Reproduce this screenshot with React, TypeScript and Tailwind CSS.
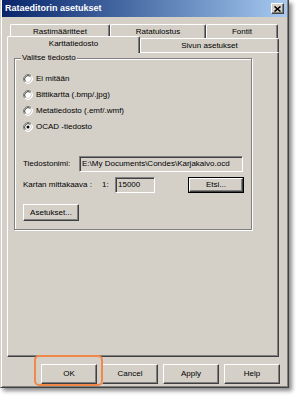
import React from "react";

function Radio({ checked }: { checked?: boolean }) {
  return (
    <svg width="10" height="10" viewBox="0 0 10 10" className="shrink-0">
      <circle cx="5" cy="5" r="4" fill="#fff" />
      <path d="M8.18 1.82 A4.5 4.5 0 0 0 1.82 8.18" stroke="#808080" fill="none" strokeWidth="1" />
      <path d="M1.82 8.18 A4.5 4.5 0 0 0 8.18 1.82" stroke="#ffffff" fill="none" strokeWidth="1" />
      <path d="M7.47 2.53 A3.5 3.5 0 0 0 2.53 7.47" stroke="#404040" fill="none" strokeWidth="1" />
      <path d="M2.53 7.47 A3.5 3.5 0 0 0 7.47 2.53" stroke="#d4d0c8" fill="none" strokeWidth="1" />
      {checked && <circle cx="5" cy="5" r="1.5" fill="#000" />}
    </svg>
  );
}

function Btn({ label, className = "" }: { label: string; className?: string }) {
  return (
    <div
      className={
        "flex items-center justify-center bg-[#d4d0c8] border border-t-white border-l-white border-r-[#404040] border-b-[#404040] shadow-[inset_-1px_-1px_#808080] " +
        className
      }
    >
      {label}
    </div>
  );
}

function Field({ value, className = "" }: { value: string; className?: string }) {
  return (
    <div
      className={
        "flex items-center pl-[2px] bg-[#d4d0c8] border border-t-[#808080] border-l-[#808080] border-r-white border-b-white shadow-[inset_1px_1px_#404040,inset_-1px_-1px_#d4d0c8] whitespace-nowrap overflow-hidden " +
        className
      }
    >
      {value}
    </div>
  );
}

function Tab({ label, className = "" }: { label: string; className?: string }) {
  return (
    <div
      className={
        "flex items-center justify-center bg-[#d4d0c8] border-t border-l border-r border-t-white border-l-white border-r-[#404040] shadow-[inset_-1px_0_#808080] rounded-t-[2px] " +
        className
      }
    >
      {label}
    </div>
  );
}

export default function App() {
  return (
    <div className="w-[296px] h-[398px] bg-white [font-family:'Liberation_Sans',Arial,sans-serif] text-[8px] leading-none text-black overflow-hidden">
      <div className="w-[289px] h-[388px] bg-[#d4d0c8] border-l border-r border-b border-l-[#d4d0c8] border-r-[#404040] border-b-[#404040] shadow-[inset_1px_0_#fff,inset_-1px_-1px_#808080,3px_3px_4px_rgba(0,0,0,0.45)] px-[1px] pb-[1px] flex flex-col">
        {/* title bar */}
        <div className="h-[17px] shrink-0 flex items-center justify-between pl-[3px] pr-[3px] bg-gradient-to-r from-[#0a246a] to-[#a6caf0]">
          <span className="text-white font-bold text-[9px] tracking-[0px]">Rataeditorin asetukset</span>
          <div className="w-[13px] h-[11px] flex items-center justify-center bg-[#d4d0c8] border border-t-white border-l-white border-r-[#404040] border-b-[#404040] shadow-[inset_-1px_-1px_#808080]">
            <svg width="7" height="6" viewBox="0 0 7 6">
              <path d="M0.5 0.5 L6.5 5.5 M6.5 0.5 L0.5 5.5" stroke="#000" strokeWidth="1.6" />
            </svg>
          </div>
        </div>

        {/* tabs */}
        <div className="ml-[5px] w-[272px] pt-[7px] flex flex-col">
          <div className="flex h-[14px] ml-[3px]">
            <Tab label="Rastimääritteet" className="w-[100px]" />
            <Tab label="Ratatulostus" className="w-[96px]" />
            <Tab label="Fontit" className="w-[72px]" />
          </div>
          <div className="flex items-end h-[14px]">
            <Tab label="Karttatiedosto" className="w-[133px] h-[17px] -mb-[1px] relative z-10 pb-[2px]" />
            <Tab label="Sivun asetukset" className="w-[139px] h-[14px]" />
          </div>

          {/* panel */}
          <div className="h-[305px] w-[272px] border border-t-white border-l-white border-r-[#404040] border-b-[#404040] shadow-[inset_-1px_-1px_#808080] pt-[5px] pl-[6px]">
            <div className="relative w-[238px] h-[172px] border border-[#808080] shadow-[1px_1px_0_#fff,inset_1px_1px_0_#fff] pt-[12px] flex flex-col">
              <div className="absolute left-[6px] -top-[5px] px-[1px] bg-[#d4d0c8]">Valitse tiedosto</div>

              {[
                { l: "Ei mitään" },
                { l: "Bittikartta (.bmp/.jpg)" },
                { l: "Metatiedosto (.emf/.wmf)" },
                { l: "OCAD -tiedosto", c: true },
              ].map((r) => (
                <div key={r.l} className="h-[16px] flex items-center pl-[8px] gap-[3px]">
                  <Radio checked={r.c} />
                  <span>{r.l}</span>
                </div>
              ))}

              <div className="mt-[21px] h-[16px] flex items-center pl-[8px]">
                <span className="w-[56px]">Tiedostonimi:</span>
                <Field value="E:\My Documents\Condes\Karjakaivo.ocd" className="w-[164px] h-[16px]" />
              </div>

              <div className="mt-[5px] h-[16px] flex items-center pl-[8px]">
                <span className="w-[79px]">Kartan mittakaava :</span>
                <span className="w-[13px]">1:</span>
                <Field value="15000" className="w-[40px] h-[16px]" />
                <div className="ml-[33px] border border-black">
                  <Btn label="Etsi..." className="w-[54px] h-[14px]" />
                </div>
              </div>

              <Btn label="Asetukset..." className="mt-[11px] ml-[8px] w-[56px] h-[17px]" />
            </div>
          </div>
        </div>

        {/* bottom buttons */}
        <div className="mt-[7px] ml-[39px] flex gap-[5px]">
          <div className="relative">
            <Btn label="OK" className="w-[56px] h-[20px]" />
            <div className="absolute -left-[7px] -top-[9px] w-[69px] h-[31px] border-2 border-[#f0884a] rounded-[5px]" />
          </div>
          <Btn label="Cancel" className="w-[56px] h-[20px]" />
          <Btn label="Apply" className="w-[56px] h-[20px]" />
          <Btn label="Help" className="w-[56px] h-[20px]" />
        </div>
      </div>
    </div>
  );
}
